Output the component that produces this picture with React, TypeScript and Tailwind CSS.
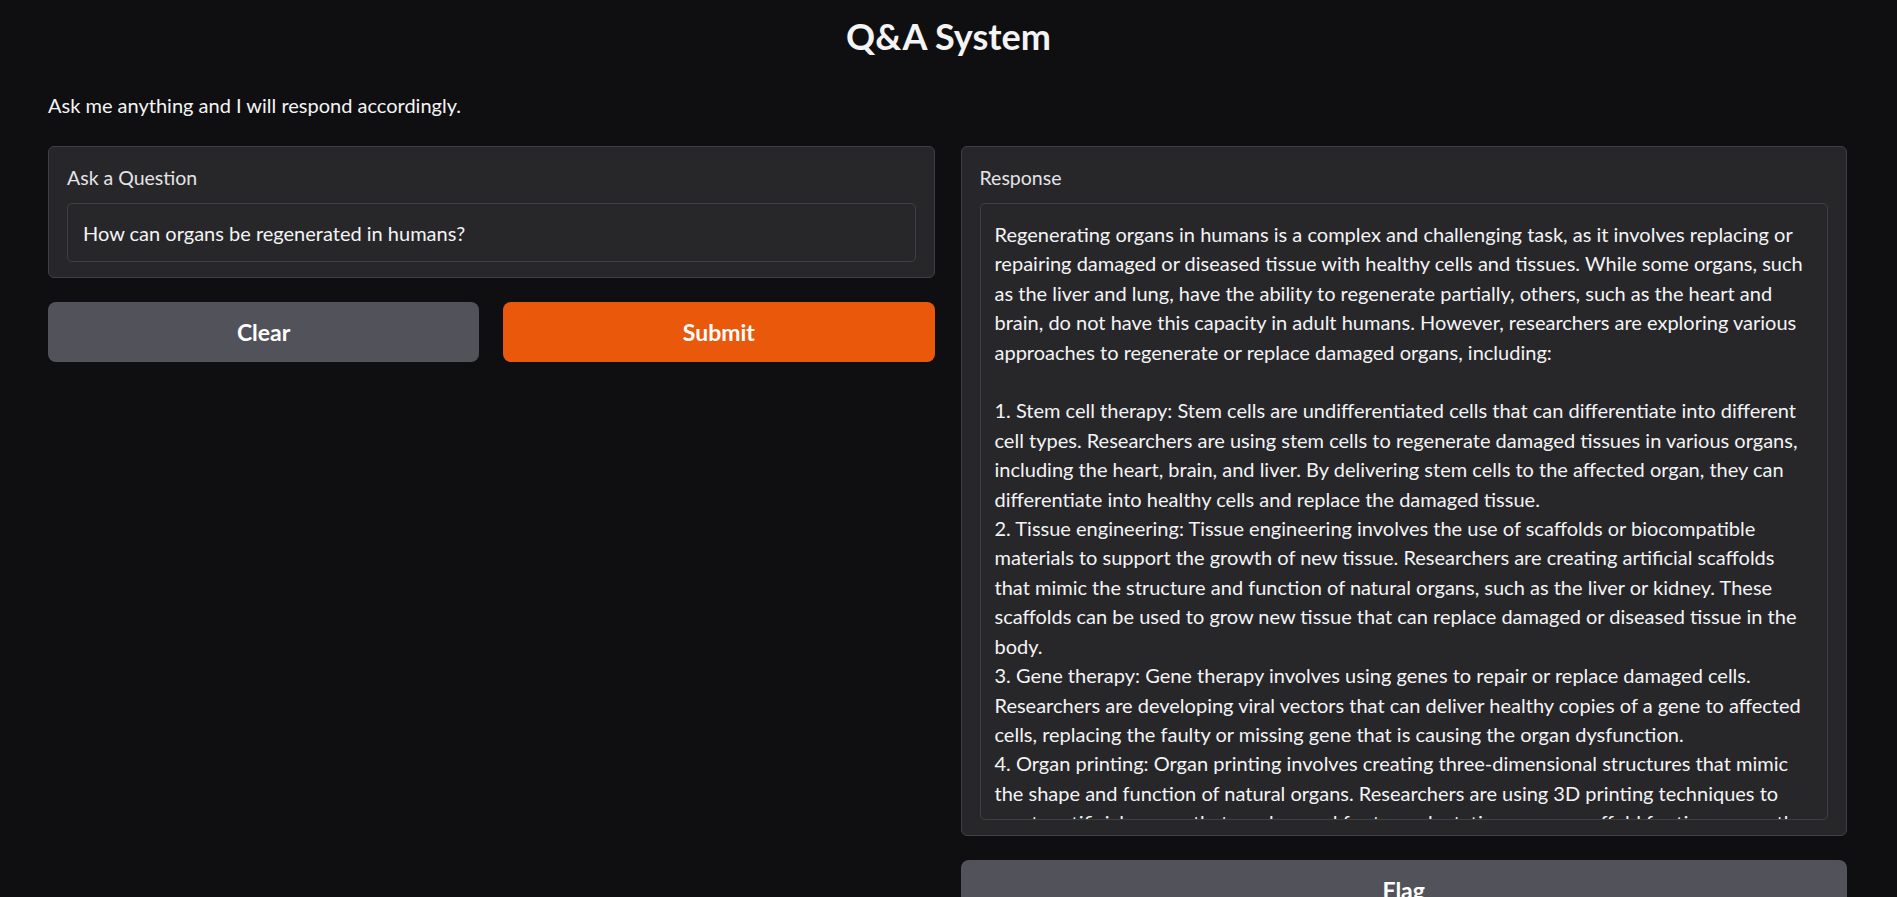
const responseLines = [
  'Regenerating organs in humans is a complex and challenging task, as it involves replacing or',
  'repairing damaged or diseased tissue with healthy cells and tissues. While some organs, such',
  'as the liver and lung, have the ability to regenerate partially, others, such as the heart and',
  'brain, do not have this capacity in adult humans. However, researchers are exploring various',
  'approaches to regenerate or replace damaged organs, including:',
  '',
  '1. Stem cell therapy: Stem cells are undifferentiated cells that can differentiate into different',
  'cell types. Researchers are using stem cells to regenerate damaged tissues in various organs,',
  'including the heart, brain, and liver. By delivering stem cells to the affected organ, they can',
  'differentiate into healthy cells and replace the damaged tissue.',
  '2. Tissue engineering: Tissue engineering involves the use of scaffolds or biocompatible',
  'materials to support the growth of new tissue. Researchers are creating artificial scaffolds',
  'that mimic the structure and function of natural organs, such as the liver or kidney. These',
  'scaffolds can be used to grow new tissue that can replace damaged or diseased tissue in the',
  'body.',
  '3. Gene therapy: Gene therapy involves using genes to repair or replace damaged cells.',
  'Researchers are developing viral vectors that can deliver healthy copies of a gene to affected',
  'cells, replacing the faulty or missing gene that is causing the organ dysfunction.',
  '4. Organ printing: Organ printing involves creating three-dimensional structures that mimic',
  'the shape and function of natural organs. Researchers are using 3D printing techniques to',
  'create artificial organs that can be used for transplantation or as a scaffold for tissue growth.',
  '5. Xenotransplantation: Xenotransplantation involves transplanting organs or tissues from',
];

function Block({ label, children, className }: { label: string; children: React.ReactNode; className?: string }) {
  return (
    <div className={`flex flex-col rounded-[6px] border border-[#3f3f46] bg-[#27272a] px-[18px] pt-[20px] ${className ?? ''}`}>
      <span className="text-[19.5px] leading-[22px] text-[#e4e4e7]">{label}</span>
      {children}
    </div>
  );
}

export default function App() {
  return (
    <div className="h-[897px] overflow-hidden bg-[#0f0f11] font-['Lato','Noto_Sans',sans-serif] text-[#f4f4f5]">
      <h1 className="pt-[14px] text-center text-[36px] font-bold leading-[44px]">Q&amp;A System</h1>

      <p className="mt-[35px] pl-[48px] text-[20px] leading-[24px]">Ask me anything and I will respond accordingly.</p>

      <div className="mt-[29px] grid grid-cols-2 gap-[26px] pl-[48px] pr-[50px]">
        {/* left column */}
        <div className="flex flex-col gap-[24px]">
          <Block label="Ask a Question" className="pb-[15px]">
            <div className="mt-[14px] flex h-[59px] items-center rounded-[5px] border border-[#3f3f46] bg-[#27272a] px-[15px] text-[20px]">
              How can organs be regenerated in humans?
            </div>
          </Block>
          <div className="grid grid-cols-2 gap-[24px]">
            <button className="h-[60px] rounded-[8px] bg-[#52525b] text-[23px] font-bold text-white">Clear</button>
            <button className="h-[60px] rounded-[8px] bg-[#ea580c] text-[23px] font-bold text-white">Submit</button>
          </div>
        </div>

        {/* right column */}
        <div className="flex flex-col gap-[24px]">
          <Block label="Response" className="h-[690px] pb-[15px]">
            <div className="mt-[14px] min-h-0 flex-1 overflow-hidden rounded-[5px] border border-[#3f3f46] bg-[#27272a] px-[14px] pt-[16px] text-[20px] leading-[29.4px]">
              {responseLines.map((line, i) => (
                <div key={i} className="whitespace-pre">{line || '\u00a0'}</div>
              ))}
            </div>
          </Block>
          <button className="h-[60px] shrink-0 rounded-[8px] bg-[#52525b] text-[23px] font-bold text-white">Flag</button>
        </div>
      </div>
    </div>
  );
}
